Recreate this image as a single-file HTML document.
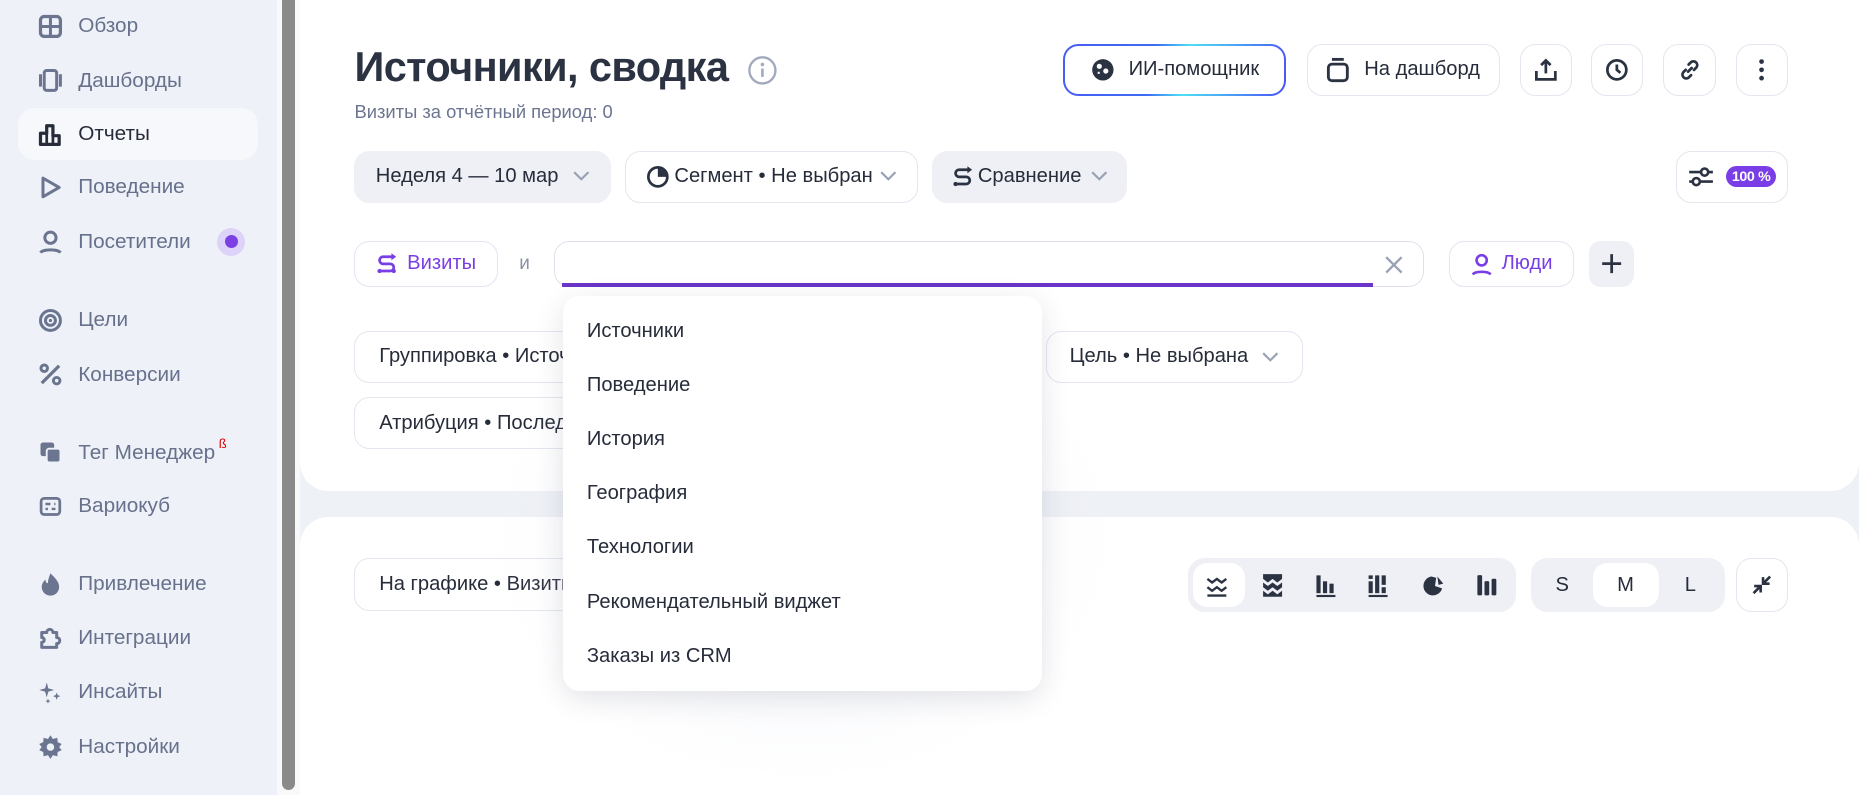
<!DOCTYPE html>
<html><head><meta charset="utf-8"><style>
*{box-sizing:border-box;margin:0;padding:0}
html,body{width:1859px;height:795px;overflow:hidden;background:#eef1f6}
#w{zoom:1.18559;width:1568px;height:671px;position:relative;font-family:"Liberation Sans",sans-serif;color:#262c3a;font-size:17px}
.a{position:absolute}
.side{left:0;top:0;width:234px;height:671px;background:#eef1f7}
.it{position:absolute;left:15px;width:203px;height:44px;display:flex;align-items:center;padding-left:17px;color:#67718c;font-size:17.5px}
.it svg{width:21px;height:21px;margin-right:13px;flex:none}
.it.act{background:#f7f8fb;border-radius:14px;color:#262c3a}
.card{background:#fff;left:253px;width:1315px}
.btn{position:absolute;height:44px;border-radius:13px;border:1px solid #e3e6ee;background:#fff;display:flex;align-items:center;justify-content:center;font-size:17px;color:#262c3a}
.g{background:#eef0f5;border-color:#eef0f5}
.chev{width:14px;height:9px;margin-left:8px}
.dd div{height:45.6px;display:flex;align-items:center;padding-left:20px;font-size:17px}
</style></head><body><div id="w">
<div class="a side">
 <div class="it" style="top:0"><svg viewBox="0 0 20 20"><rect x="2" y="2" width="16" height="16" rx="3" fill="none" stroke="#6b7590" stroke-width="2.6"/><path d="M10 2v16M2 10h16" stroke="#6b7590" stroke-width="2.4"/></svg>Обзор</div>
 <div class="it" style="top:46px"><svg viewBox="0 0 20 20"><rect x="5" y="2" width="10" height="16" rx="2" fill="none" stroke="#6b7590" stroke-width="2.4"/><path d="M2 5v10M18 5v10" stroke="#6b7590" stroke-width="2.4"/></svg>Дашборды</div>
 <div class="it act" style="top:91px"><svg viewBox="0 0 20 20"><path d="M2 18V9h5V3h5v8h5v7z" fill="none" stroke="#262c3a" stroke-width="2.6" stroke-linejoin="round"/><path d="M7 9v9M12 11v7" stroke="#262c3a" stroke-width="2.2"/></svg>Отчеты</div>
 <div class="it" style="top:136px"><svg viewBox="0 0 20 20"><path d="M4 2.5v15l13-7.5z" fill="none" stroke="#6b7590" stroke-width="2.4" stroke-linejoin="round"/></svg>Поведение</div>
 <div class="it" style="top:182px"><svg viewBox="0 0 20 20"><circle cx="10" cy="7" r="4.5" fill="none" stroke="#6b7590" stroke-width="2.4"/><path d="M2 19c2-3 14-3 16 0" fill="none" stroke="#6b7590" stroke-width="2.4"/></svg>Посетители<span style="margin-left:22px;width:24px;height:24px;border-radius:50%;background:#ddd3f8;display:flex;align-items:center;justify-content:center"><span style="width:11px;height:11px;border-radius:50%;background:#7b3fe4"></span></span></div>
 <div class="it" style="top:248px"><svg viewBox="0 0 20 20"><circle cx="10" cy="10" r="8" fill="none" stroke="#6b7590" stroke-width="2.4"/><circle cx="10" cy="10" r="4" fill="none" stroke="#6b7590" stroke-width="2.4"/><circle cx="10" cy="10" r="1.3" fill="#6b7590"/></svg>Цели</div>
 <div class="it" style="top:294px"><svg viewBox="0 0 20 20"><circle cx="5" cy="5" r="2.6" fill="none" stroke="#6b7590" stroke-width="2.4"/><circle cx="15" cy="15" r="2.6" fill="none" stroke="#6b7590" stroke-width="2.4"/><path d="M3 17L17 3" stroke="#6b7590" stroke-width="2.6"/></svg>Конверсии</div>
 <div class="it" style="top:360px"><svg viewBox="0 0 20 20"><rect x="2" y="2" width="11" height="11" rx="2" fill="#6b7590"/><rect x="7" y="7" width="11" height="11" rx="2" fill="#6b7590" stroke="#eef1f7" stroke-width="1.5"/></svg>Тег Менеджер<sup style="color:#d00;font-size:11px;margin-left:3px;align-self:flex-start;margin-top:8px">ß</sup></div>
 <div class="it" style="top:405px"><svg viewBox="0 0 20 20"><rect x="2.5" y="3.5" width="15" height="13" rx="2.5" fill="none" stroke="#6b7590" stroke-width="2.2"/><path d="M6 8h4M6 12h2M11 12h3M13 8h1" stroke="#6b7590" stroke-width="2"/></svg>Вариокуб</div>
 <div class="it" style="top:471px"><svg viewBox="0 0 20 20"><path d="M10 1c4 4 7 7 7 11a7 7 0 0 1-14 0c0-3 2-5 3-6 0 2 1 3 2 3 0-3 1-5 2-8z" fill="#6b7590"/></svg>Привлечение</div>
 <div class="it" style="top:516px"><svg viewBox="0 0 20 20"><path d="M3 6h4a2.5 2.5 0 0 1 5 0h3v4a2.5 2.5 0 0 1 0 5v3H3v-4a2 2 0 0 0 0-4z" fill="none" stroke="#6b7590" stroke-width="2.4" stroke-linejoin="round"/></svg>Интеграции</div>
 <div class="it" style="top:562px"><svg viewBox="0 0 20 20"><path d="M7 2l1.3 4.7L13 8l-4.7 1.3L7 14l-1.3-4.7L1 8l4.7-1.3zM15 10l.8 2.2 2.2.8-2.2.8L15 16l-.8-2.2L12 13l2.2-.8zM8 15l.6 1.4L10 17l-1.4.6L8 19l-.6-1.4L6 17l1.4-.6z" fill="#6b7590"/></svg>Инсайты</div>
 <div class="it" style="top:608px"><svg viewBox="0 0 20 20"><path d="M10 1l2 3 3.5-1 .3 3.5L19 8l-2 2.5 2 2.5-3.2 1.5-.3 3.5-3.5-1-2 3-2-3-3.5 1-.3-3.5L1 13l2-2.5L1 8l3.2-1.5.3-3.5 3.5 1z" fill="#6b7590"/><circle cx="10" cy="10.5" r="3" fill="#eef1f7"/></svg>Настройки</div>
</div>
<div class="a" style="left:234px;top:0;width:19px;height:671px;background:#f9f9fa"></div>
<div class="a" style="left:238px;top:0;width:11px;height:666px;background:#8a8a8a;border-radius:0 0 6px 6px"></div>

<div class="a card" style="top:0;height:414px;border-radius:0 0 24px 24px"></div>
<div class="a card" style="top:436px;height:235px;border-radius:24px 24px 0 0"></div>

<div class="a" style="left:299px;top:36px;font-size:35px;font-weight:bold;color:#2b3242;letter-spacing:-0.5px">Источники, сводка</div>
<svg class="a" style="left:630px;top:46px" width="26" height="26" viewBox="0 0 26 26"><circle cx="13" cy="13" r="11" fill="none" stroke="#a3aabd" stroke-width="2"/><circle cx="13" cy="8" r="1.5" fill="#a3aabd"/><path d="M13 11.5v7" stroke="#a3aabd" stroke-width="2.2"/></svg>
<div class="a" style="left:299px;top:85px;font-size:15.5px;color:#6b7590">Визиты за отчётный период: 0</div>

<div class="btn" style="left:897px;top:37px;width:188px;border:2.5px solid transparent;background:linear-gradient(#fff,#fff) padding-box,linear-gradient(100deg,#4a5cf6,#3b6cf2 40%,#4fe0f4 55%,#4a52f6) border-box"><svg width="20" height="20" viewBox="0 0 20 20" style="margin-right:12px"><circle cx="10" cy="10" r="9" fill="#2b3242"/><circle cx="7" cy="7" r="2.2" fill="#fff"/><circle cx="12.5" cy="11" r="2.2" fill="#fff"/><circle cx="6.5" cy="12.5" r="1" fill="#fff"/></svg>ИИ-помощник</div>
<div class="btn" style="left:1102px;top:37px;width:163px"><svg width="20" height="22" viewBox="0 0 20 22" style="margin-right:12px"><path d="M5 2h10" stroke="#2b3242" stroke-width="2.4"/><rect x="2" y="6" width="16" height="14" rx="3" fill="none" stroke="#2b3242" stroke-width="2.4"/></svg>На дашборд</div>
<div class="btn" style="left:1282px;top:37px;width:44px"><svg width="20" height="20" viewBox="0 0 20 20"><path d="M10 13V2M6 6l4-4 4 4M2 11v7h16v-7" fill="none" stroke="#2b3242" stroke-width="2.3"/></svg></div>
<div class="btn" style="left:1342px;top:37px;width:44px"><svg width="20" height="20" viewBox="0 0 20 20"><circle cx="10" cy="10" r="8" fill="none" stroke="#2b3242" stroke-width="2.3"/><path d="M10 5.5V10l3 2.5" fill="none" stroke="#2b3242" stroke-width="2.3"/></svg></div>
<div class="btn" style="left:1403px;top:37px;width:44px"><svg width="20" height="20" viewBox="0 0 20 20"><path d="M8.5 11.5l3-3M9 5.5l2-2a3.2 3.2 0 0 1 4.5 4.5l-2 2M11 14.5l-2 2a3.2 3.2 0 0 1-4.5-4.5l2-2" fill="none" stroke="#2b3242" stroke-width="2.3" stroke-linecap="round"/></svg></div>
<div class="btn" style="left:1464px;top:37px;width:44px"><svg width="6" height="20" viewBox="0 0 6 20"><circle cx="3" cy="3" r="2" fill="#2b3242"/><circle cx="3" cy="10" r="2" fill="#2b3242"/><circle cx="3" cy="17" r="2" fill="#2b3242"/></svg></div>

<div class="btn g" style="left:299px;top:127px;width:216px">Неделя 4 — 10 мар<svg class="chev" viewBox="0 0 14 9" style="margin-left:12px"><path d="M1 1l6 6 6-6" fill="none" stroke="#9aa1b5" stroke-width="1.8"/></svg></div>
<div class="btn" style="left:527px;top:127px;width:247px"><svg width="20" height="20" viewBox="0 0 20 20" style="margin-right:4px"><circle cx="10" cy="10" r="8" fill="none" stroke="#2b3242" stroke-width="2.3"/><path d="M10 10V2a8 8 0 0 1 8 8z" fill="#2b3242"/></svg>Сегмент • Не выбран<svg class="chev" viewBox="0 0 14 9" style="margin-left:6px"><path d="M1 1l6 6 6-6" fill="none" stroke="#9aa1b5" stroke-width="1.8"/></svg></div>
<div class="btn g" style="left:786px;top:127px;width:165px"><svg width="18" height="20" viewBox="0 0 18 20" style="margin-right:4px"><path d="M14 4H6a3 3 0 0 0 0 6h6a3 3 0 0 1 0 6H4" fill="none" stroke="#2b3242" stroke-width="2.3"/><path d="M13 1l4 3-4 3z" fill="#2b3242"/><circle cx="3" cy="16" r="1.8" fill="#2b3242"/></svg>Сравнение<svg class="chev" viewBox="0 0 14 9"><path d="M1 1l6 6 6-6" fill="none" stroke="#9aa1b5" stroke-width="1.8"/></svg></div>
<div class="btn" style="left:1414px;top:127px;width:94px"><svg width="22" height="20" viewBox="0 0 22 20" style="margin-right:10px"><path d="M1 6h20M1 14h20" stroke="#2b3242" stroke-width="2.2"/><circle cx="14" cy="6" r="3" fill="#fff" stroke="#2b3242" stroke-width="2.2"/><circle cx="7" cy="14" r="3" fill="#fff" stroke="#2b3242" stroke-width="2.2"/></svg><span style="background:#7a3ee6;color:#fff;font-weight:bold;font-size:12px;border-radius:9px;padding:2px 5px;letter-spacing:-0.3px">100 %</span></div>

<div class="btn" style="left:299px;top:203px;width:121px;height:39px;color:#7a3ee6;border-color:#e6e2f3"><svg width="18" height="20" viewBox="0 0 18 20" style="margin-right:8px"><path d="M14 4H6a3 3 0 0 0 0 6h6a3 3 0 0 1 0 6H4" fill="none" stroke="#7a3ee6" stroke-width="2.3"/><path d="M13 1l4 3-4 3z" fill="#7a3ee6"/><circle cx="3" cy="16" r="1.8" fill="#7a3ee6"/><circle cx="15" cy="16" r="1.8" fill="#7a3ee6"/></svg>Визиты</div>
<div class="a" style="left:438px;top:213px;color:#8a91a5;font-size:16px">и</div>
<div class="btn" style="left:467px;top:203px;width:734px;height:39px;border-color:#dfe2ea"></div>
<div class="a" style="left:474px;top:239px;width:684px;height:3px;background:#6a35c8"></div>
<svg class="a" style="left:1168px;top:216px" width="15" height="15" viewBox="0 0 15 15"><path d="M1 1l13 13M14 1L1 14" stroke="#9aa1b5" stroke-width="2"/></svg>
<div class="btn" style="left:1222px;top:203px;width:106px;height:39px;color:#7a3ee6;border-color:#e6e2f3"><svg width="18" height="20" viewBox="0 0 18 20" style="margin-right:8px"><circle cx="9" cy="7" r="4.3" fill="none" stroke="#7a3ee6" stroke-width="2.2"/><path d="M1.5 19c2-3 13-3 15 0" fill="none" stroke="#7a3ee6" stroke-width="2.2"/></svg>Люди</div>
<div class="btn g" style="left:1340px;top:203px;width:38px;height:39px;border-radius:10px"><svg width="18" height="18" viewBox="0 0 18 18"><path d="M9 1v16M1 9h16" stroke="#2b3242" stroke-width="2.3"/></svg></div>

<div class="btn" style="left:299px;top:279px;width:240px;justify-content:flex-start;padding-left:20px">Группировка • Источник</div>
<div class="btn" style="left:882px;top:279px;width:217px">Цель • Не выбрана<svg class="chev" viewBox="0 0 14 9" style="margin-left:12px"><path d="M1 1l6 6 6-6" fill="none" stroke="#9aa1b5" stroke-width="1.8"/></svg></div>
<div class="btn" style="left:299px;top:335px;width:240px;justify-content:flex-start;padding-left:20px">Атрибуция • Последний</div>

<div class="btn" style="left:299px;top:471px;width:240px;justify-content:flex-start;padding-left:20px">На графике • Визиты</div>
<div class="a" style="left:1002px;top:471px;width:277px;height:45px;background:#eef0f5;border-radius:14px"></div>
<div class="a" style="left:1006px;top:475px;width:44px;height:37px;background:#fff;border-radius:12px"></div>
<svg class="a" style="left:1016px;top:483px" width="230" height="22" viewBox="0 0 230 22">
<g fill="none" stroke="#2b3242" stroke-width="2"><path d="M2 5l4 3 4-3 4 3 4-3M2 12l4 3 4-3 4 3 4-3M2 19h16"/></g>
<g transform="translate(47,0)" fill="#2b3242"><path d="M2 1h16v4l-4 3-4-3-4 3-4-3zM2 8l4 3 4-3 4 3 4-3v4l-4 3-4-3-4 3-4-3zM2 15l4 3 4-3 4 3 4-3v5H2z"/></g>
<g transform="translate(92,0)" fill="#2b3242"><rect x="2" y="2" width="3.5" height="15"/><rect x="7.5" y="7" width="3.5" height="10"/><rect x="13" y="9" width="3.5" height="8"/><rect x="2" y="18.5" width="16" height="1.8"/></g>
<g transform="translate(136,0)" fill="#2b3242"><rect x="2" y="7" width="3.5" height="10"/><rect x="2" y="2" width="3.5" height="3"/><rect x="7.5" y="2" width="3.5" height="15"/><rect x="13" y="2" width="3.5" height="8"/><rect x="13" y="12" width="3.5" height="5"/><rect x="2" y="18.5" width="16" height="1.8"/></g>
<g transform="translate(183,1)"><path d="M8 2a8 8 0 1 0 9 10l-6-2 1-7z" fill="#2b3242"/><path d="M13 2l5 6-4 1z" fill="#2b3242"/></g>
</svg>
<svg class="a" style="left:1244px;top:484px" width="20" height="20" viewBox="0 0 20 20"><g fill="#2b3242"><rect x="2" y="1" width="4" height="17" rx="1"/><rect x="8" y="6" width="4" height="12" rx="1"/><rect x="14" y="4" width="4" height="14" rx="1"/></g></svg>

<div class="a" style="left:1291px;top:471px;width:164px;height:45px;background:#eef0f5;border-radius:14px"></div>
<div class="a" style="left:1344px;top:475px;width:55px;height:37px;background:#fff;border-radius:12px"></div>
<div class="a" style="left:1312px;top:484px;font-size:17px">S</div>
<div class="a" style="left:1364px;top:484px;font-size:17px">M</div>
<div class="a" style="left:1421px;top:484px;font-size:17px">L</div>
<div class="btn" style="left:1464px;top:471px;width:44px;height:45px"><svg width="20" height="20" viewBox="0 0 20 20"><path d="M17 3l-5 5M11 3.5V9h5.5M3 17l5-5M9 16.5V11H3.5" fill="none" stroke="#2b3242" stroke-width="2.2"/></svg></div>

<div class="a" style="left:412px;top:242px;width:530px;height:420px;border-radius:50%;background:radial-gradient(ellipse at center,rgba(230,233,242,0.5),rgba(255,255,255,0) 70%)"></div>
<div class="a dd" style="left:475px;top:250px;width:404px;height:333px;background:#fff;border-radius:14px;box-shadow:0 6px 24px rgba(40,50,80,0.13);padding-top:7px">
<div>Источники</div><div>Поведение</div><div>История</div><div>География</div><div>Технологии</div><div>Рекомендательный виджет</div><div>Заказы из CRM</div>
</div>
</div></body></html>
